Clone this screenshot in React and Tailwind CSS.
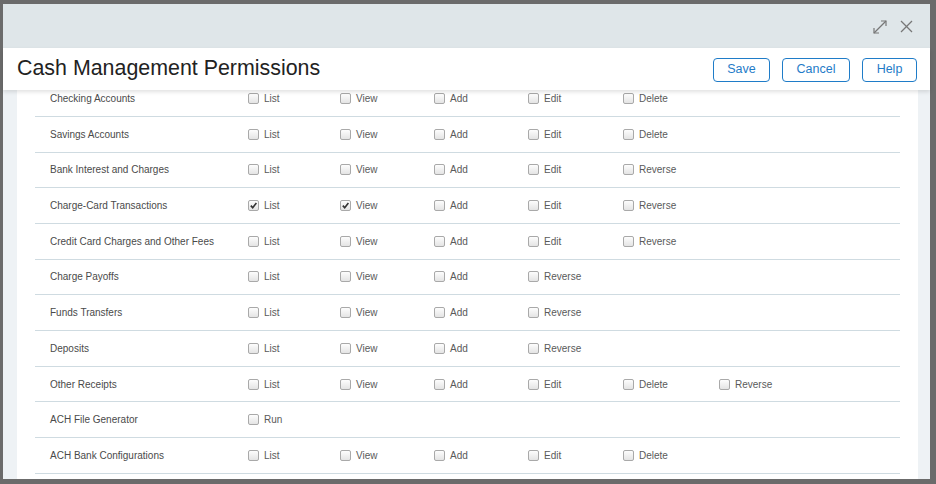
import React from "react";

const rows = [
  { name: "Checking Accounts", perms: ["List", "View", "Add", "Edit", "Delete"] },
  { name: "Savings Accounts", perms: ["List", "View", "Add", "Edit", "Delete"] },
  { name: "Bank Interest and Charges", perms: ["List", "View", "Add", "Edit", "Reverse"] },
  { name: "Charge-Card Transactions", perms: ["List", "View", "Add", "Edit", "Reverse"], checked: [0, 1] },
  { name: "Credit Card Charges and Other Fees", perms: ["List", "View", "Add", "Edit", "Reverse"] },
  { name: "Charge Payoffs", perms: ["List", "View", "Add", "Reverse"] },
  { name: "Funds Transfers", perms: ["List", "View", "Add", "Reverse"] },
  { name: "Deposits", perms: ["List", "View", "Add", "Reverse"] },
  { name: "Other Receipts", perms: ["List", "View", "Add", "Edit", "Delete", "Reverse"] },
  { name: "ACH File Generator", perms: ["Run"] },
  { name: "ACH Bank Configurations", perms: ["List", "View", "Add", "Edit", "Delete"] },
];

// column widths picked to line up with the original grid
const colW = ["w-[92px]", "w-[94px]", "w-[94px]", "w-[95px]", "w-[96px]", "w-[94px]"];

function Checkbox({ checked }) {
  return (
    <span className="w-[11px] h-[11px] rounded-[2px] border border-[#a9a9a9] bg-gradient-to-b from-[#fdfdfd] to-[#e4e4e4] flex items-center justify-center shrink-0">
      {checked && (
        <svg width="9" height="9" viewBox="0 0 10 10">
          <path d="M2 5.2 L4.1 7.4 L8.2 2.2" fill="none" stroke="#333" strokeWidth="1.8" />
        </svg>
      )}
    </span>
  );
}

export default function App() {
  return (
    <div
      className="w-[936px] h-[484px] bg-[#6b6b6b] pt-[4px] pl-[3px] pr-[6px] pb-[5px] overflow-hidden"
      style={{ fontFamily: '"Liberation Sans", Arial, sans-serif' }}
    >
      <div className="flex flex-col h-full">
        {/* top band */}
        <div className="h-[44px] bg-[#dfe6e9] flex items-center justify-end gap-[10px] pr-[17px] shrink-0">
          <svg width="18" height="18" viewBox="0 0 18 18" className="mt-[2px] mr-[1px]">
            <g fill="none" stroke="#777" strokeWidth="1.2">
              <path d="M3 15 L15 3" />
              <path d="M10 3 L15 3 L15 8" />
              <path d="M3 10 L3 15 L8 15" />
            </g>
          </svg>
          <svg width="13" height="13" viewBox="0 0 13 13">
            <g fill="none" stroke="#777" strokeWidth="1.3">
              <path d="M1 1 L12 12" />
              <path d="M12 1 L1 12" />
            </g>
          </svg>
        </div>

        {/* title bar */}
        <div className="h-[42px] bg-white flex items-center justify-between pl-[14px] pr-[13px] relative z-10 shadow-[0_2px_4px_rgba(0,0,0,0.12)] shrink-0">
          <h1 className="text-[21.4px] text-[#222] leading-none">Cash Management Permissions</h1>
          <div className="flex gap-[12px] mt-[1px]">
            <button className="w-[57px] h-[24px] border-[1.5px] border-[#1f7cc8] rounded-[4px] text-[12.5px] text-[#1f7cc8] bg-white">Save</button>
            <button className="w-[68px] h-[24px] border-[1.5px] border-[#1f7cc8] rounded-[4px] text-[12.5px] text-[#1f7cc8] bg-white">Cancel</button>
            <button className="w-[55px] h-[24px] border-[1.5px] border-[#1f7cc8] rounded-[4px] text-[12.5px] text-[#1f7cc8] bg-white">Help</button>
          </div>
        </div>

        {/* content */}
        <div className="flex-1 overflow-hidden bg-[#eef2f5] pl-[14px] pr-[12px]">
          <div className="h-full bg-white px-[18px] overflow-hidden">
            <div className="-mt-[8.8px]">
              {rows.map((r) => (
                <div key={r.name} className="flex items-center h-[35.7px] border-b border-[#cfdbe1] pl-[15px]">
                  <div className="w-[198px] text-[10px] text-[#4a4a4a]">{r.name}</div>
                  {r.perms.map((p, i) => (
                    <div key={p} className={`${colW[i]} flex items-center gap-[5px]`}>
                      <Checkbox checked={r.checked && r.checked.includes(i)} />
                      <span className="text-[10px] text-[#5a5a5a]">{p}</span>
                    </div>
                  ))}
                </div>
              ))}
            </div>
          </div>
        </div>
      </div>
    </div>
  );
}
